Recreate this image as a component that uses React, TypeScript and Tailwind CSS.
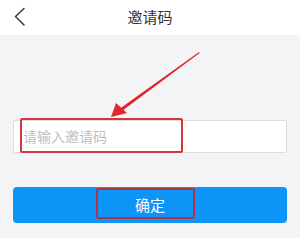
const font = { fontFamily: '"Noto Sans CJK SC", "Noto Sans", sans-serif' };

export default function App() {
  return (
    <div
      className="relative h-[238px] w-[300px] overflow-hidden bg-[#f3f4f6]"
      style={font}
    >
      {/* header */}
      <div className="relative flex h-[35px] items-center justify-center bg-white">
        <svg className="absolute left-[13px] top-[7px]" width="14" height="20" viewBox="0 0 14 20">
          <polyline
            points="11,1.5 2.5,9.5 11,18"
            fill="none"
            stroke="#3a3a3a"
            strokeWidth="1.5"
            strokeLinecap="round"
            strokeLinejoin="round"
          />
        </svg>
        <span className="text-[15px] text-[#333]">邀请码</span>
      </div>

      {/* form */}
      <div className="flex flex-col px-[13px] pt-[85px]">
        <div className="flex h-[33px] items-center rounded-[2px] border border-[#dcdcdc] bg-white px-[9px]">
          <span className="text-[14px] text-[#c0c0c0]">请输入邀请码</span>
        </div>
        <button className="mt-[34px] flex h-[36px] items-center justify-center rounded-[4px] bg-[#0c95f6] text-[15px] text-white">
          确定
        </button>
      </div>

      {/* annotations */}
      <div className="absolute left-[20px] top-[118px] h-[35px] w-[163px] rounded-[2px] border-2 border-[#d8353a]" />
      <div className="absolute left-[96px] top-[188px] h-[31px] w-[99px] rounded-[2px] border-2 border-[#b23245]" />
      <svg className="absolute left-0 top-0" width="300" height="238" viewBox="0 0 300 238">
        <polygon points="199,52 199.6,53 122,111 120,108.5" fill="#e0282c" />
        <polygon points="111,117 116,103 127,113" fill="#e0282c" />
      </svg>
    </div>
  );
}
